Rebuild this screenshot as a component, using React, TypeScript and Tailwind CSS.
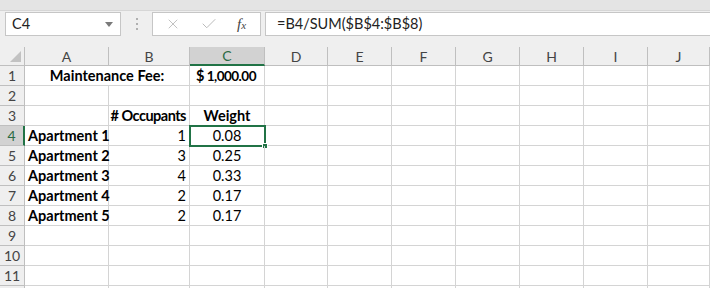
import { X, Check } from "lucide-react";

const font = { fontFamily: "Lato, 'Liberation Sans', sans-serif" };

type Row = { n: number; a?: string; b?: string; c?: string; merged?: boolean; label?: boolean };

const rows: Row[] = [
  { n: 1, merged: true },
  { n: 2 },
  { n: 3, b: "# Occupants", c: "Weight" },
  { n: 4, a: "Apartment 1", b: "1", c: "0.08" },
  { n: 5, a: "Apartment 2", b: "3", c: "0.25" },
  { n: 6, a: "Apartment 3", b: "4", c: "0.33" },
  { n: 7, a: "Apartment 4", b: "2", c: "0.17" },
  { n: 8, a: "Apartment 5", b: "2", c: "0.17" },
  { n: 9 },
  { n: 10 },
  { n: 11 },
  { n: 12, label: false },
];

const cols = ["A", "B", "C", "D", "E", "F", "G", "H", "I", "J"];

const cell = "h-[20px] border-r border-b border-[#d4d4d4] flex items-end px-[3px] pb-[1px] leading-[16px] text-[14.5px] text-black whitespace-nowrap overflow-visible";

const FormulaBar = () => (
  <div className="bg-[#efefef]">
    <div className="h-[11px] bg-[#e4e4e4] border-b border-[#d6d6d6]" />
    <div className="h-[36px] flex items-start pt-[1px]">
      {/* name box */}
      <div className="ml-[5px] w-[116px] h-[24px] bg-white border border-[#c6c6c6] flex items-center justify-between pl-[6px] pr-[7px]">
        <span className="text-[14.5px] text-[#222]">C4</span>
        <svg width="8" height="5" viewBox="0 0 8 5">
          <path d="M0 0h8L4 5z" fill="#7a7a7a" />
        </svg>
      </div>
      <div className="w-[31px] h-[24px] flex flex-col items-center justify-center gap-[3px]">
        <span className="w-[2px] h-[2px] bg-[#b0b0b0]" />
        <span className="w-[2px] h-[2px] bg-[#b0b0b0]" />
        <span className="w-[2px] h-[2px] bg-[#b0b0b0]" />
      </div>
      {/* function box */}
      <div className="w-[109px] h-[24px] bg-white border border-[#c6c6c6] flex items-center pl-[12px]">
        <X className="w-[16px] h-[16px] text-[#b8b8b8]" strokeWidth={1.3} />
        <Check className="w-[18px] h-[18px] ml-[19px] text-[#b8b8b8]" strokeWidth={1.3} />
        <span
          className="ml-[19px] text-[15px] italic text-[#444]"
          style={{ fontFamily: "'Liberation Serif', serif" }}
        >
          f<span className="text-[11px]">x</span>
        </span>
      </div>
      {/* formula */}
      <div className="ml-[4px] flex-1 h-[24px] bg-white border border-[#c6c6c6] border-r-0 flex items-center pl-[11px]">
        <span className="text-[14.5px] text-[#222]">=B4/SUM($B$4:$B$8)</span>
      </div>
    </div>
  </div>
);

const Grid = () => (
  <div className="grid grid-cols-[25px_84px_81px_75px_63px_64px_64px_64px_64px_64px_62px]">
    {/* header row */}
    <div className="h-[19px] bg-[#efefef] border-r border-b border-[#bfbfbf] flex items-end justify-end p-[3px]">
      <svg width="11" height="11" viewBox="0 0 11 11">
        <path d="M11 0V11H0z" fill="#c2c2c2" />
      </svg>
    </div>
    {cols.map((c) =>
      c === "C" ? (
        <div
          key={c}
          className="h-[19px] bg-[#d2d2d2] border-r border-[#bfbfbf] border-b-2 border-b-[#217346] flex items-center justify-center text-[14px] text-[#2a6a44]"
        >
          {c}
        </div>
      ) : (
        <div
          key={c}
          className="h-[19px] bg-[#efefef] border-r border-b border-[#bfbfbf] flex items-center justify-center text-[14px] text-[#444]"
        >
          {c}
        </div>
      )
    )}

    {rows.map((r) => (
      <RowCells key={r.n} r={r} />
    ))}
  </div>
);

const RowCells = ({ r }: { r: Row }) => {
  const selected = r.n === 4;
  return (
    <>
      {selected ? (
        <div className="h-[20px] bg-[#d2d2d2] border-b border-[#bfbfbf] border-r-2 border-r-[#217346] flex items-center justify-center text-[14px] text-[#2a6a44]">
          {r.n}
        </div>
      ) : (
        <div className="h-[20px] bg-[#efefef] border-r border-b border-[#bfbfbf] flex items-center justify-center text-[14px] text-[#444]">
          {r.label === false ? "" : r.n}
        </div>
      )}

      {r.merged ? (
        <>
          <div className={`${cell} col-span-2 justify-center font-bold`}>Maintenance Fee:</div>
          <div className="h-[20px] border-r border-b border-[#d4d4d4] flex items-end justify-between pl-[6px] pr-[8px] pb-[1px] leading-[16px] text-[14.5px] text-black font-bold whitespace-nowrap">
            <span>$</span>
            <span className="text-[13.5px] tracking-[-0.5px]">1,000.00</span>
          </div>
        </>
      ) : (
        <>
          <div className={`${cell} font-bold`}>{r.a}</div>
          <div className={`${cell} justify-end ${r.n === 3 ? "font-bold tracking-[-0.5px]" : ""}`}>{r.b}</div>
          <div className={`${cell} justify-center relative ${r.n === 3 ? "font-bold" : ""}`}>
            {r.c}
            {selected && (
              <div className="absolute -left-[1px] -top-[1px] w-[77px] h-[22px] border-2 border-[#217346]">
                <div className="absolute -right-[4px] -bottom-[4px] w-[6px] h-[6px] bg-[#217346] border border-white" />
              </div>
            )}
          </div>
        </>
      )}

      {cols.slice(3).map((c) => (
        <div key={c} className={cell} />
      ))}
    </>
  );
};

export default function App() {
  return (
    <div className="w-[710px] h-[288px] overflow-hidden bg-white" style={font}>
      <FormulaBar />
      <Grid />
    </div>
  );
}
